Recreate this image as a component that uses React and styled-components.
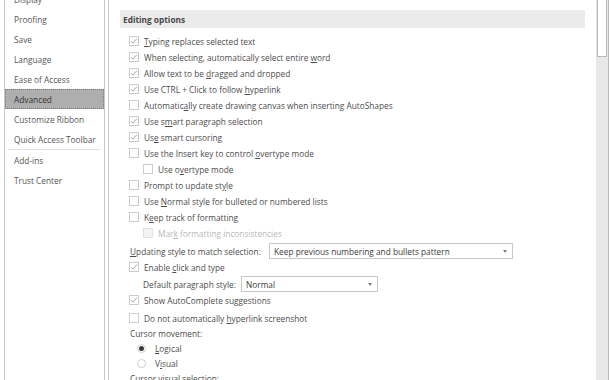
import React from 'react';
import styled, { createGlobalStyle } from 'styled-components';

const GlobalStyle = createGlobalStyle`
  html, body {
    margin: 0;
    padding: 0;
    background: #fff;
    overflow: hidden;
  }
  body {
    font-family: "Open Sans", "Noto Sans", sans-serif;
    font-size: 8.3px;
    color: #4c4c4c;
  }
`;

const Window = styled.div`
  display: flex;
  width: 610px;
  height: 380px;
  gap: 3px;
`;

const Nav = styled.nav`
  margin-left: 4px;
  width: 99px;
  border-left: 1px solid #c8c8c8;
  border-right: 1px solid #c8c8c8;
  display: flex;
  flex-direction: column;
`;

const NavList = styled.div`
  margin-top: -11px;
  display: flex;
  flex-direction: column;
`;

const NavItem = styled.div`
  height: 20px;
  display: flex;
  align-items: center;
  padding-left: 8px;
  box-sizing: border-box;
  color: ${(p) => (p.$active ? '#333' : '#555')};
  background: ${(p) => (p.$active ? '#aeaeae' : 'transparent')};
  border: 1px dotted ${(p) => (p.$active ? '#7a7a7a' : 'transparent')};
`;

const NavDivider = styled.div`
  height: 1px;
  background: #e2e2e2;
  margin: 0 4px 0 3px;
`;

const Content = styled.div`
  flex: 1;
  display: flex;
  border-left: 1px solid #c8c8c8;
`;

const Main = styled.main`
  flex: 1;
  padding: 10px 11px 0 11px;
`;

const SectionHeader = styled.div`
  height: 18px;
  background: #ebebeb;
  display: flex;
  align-items: center;
  padding-left: 3px;
  font-weight: 700;
  color: #474747;
`;

const Options = styled.div`
  margin-top: 5px;
  display: flex;
  flex-direction: column;
`;

const Row = styled.div`
  height: ${(p) => p.$h || 16}px;
  margin-top: ${(p) => p.$mt || 0}px;
  display: flex;
  align-items: center;
  padding-left: ${(p) => p.$indent || 9}px;
  white-space: nowrap;
  color: ${(p) => (p.$disabled ? '#b8b8b8' : '#4c4c4c')};
`;

const Box = styled.span`
  width: 10px;
  height: 10px;
  box-sizing: border-box;
  border: 1px solid ${(p) => (p.$disabled ? '#e0e0e0' : '#cdcdcd')};
  background: ${(p) => (p.$disabled ? '#f3f3f3' : '#fff')};
  margin-right: 5px;
  display: flex;
  align-items: center;
  justify-content: center;
  flex-shrink: 0;
`;

const Radio = styled.span`
  width: 9px;
  height: 9px;
  box-sizing: border-box;
  border-radius: 50%;
  border: 1px solid ${(p) => (p.$on ? '#d4d4d4' : '#cdcdcd')};
  background: #fff;
  margin-right: 9px;
  display: flex;
  align-items: center;
  justify-content: center;
  &::after {
    content: '';
    width: 5px;
    height: 5px;
    border-radius: 50%;
    background: ${(p) => (p.$on ? '#3a3a3a' : 'transparent')};
  }
`;

const Label = styled.span`
  width: ${(p) => (p.$w ? `${p.$w}px` : 'auto')};
  flex-shrink: 0;
`;

const Select = styled.div`
  width: ${(p) => p.$w}px;
  height: 16px;
  box-sizing: border-box;
  border: 1px solid #c8c8c8;
  background: #fff;
  display: flex;
  align-items: center;
  justify-content: space-between;
  padding: 0 5px 0 4px;
  color: #3a3a3a;
`;

const Arrow = styled.span`
  width: 0;
  height: 0;
  border-left: 2.5px solid transparent;
  border-right: 2.5px solid transparent;
  border-top: 3px solid #808080;
`;

const Scrollbar = styled.div`
  width: 12px;
  background: #e8e8e8;
  border-right: 1px solid #bcbcbc;
  margin-right: 1px;
`;

const Thumb = styled.div`
  height: 57px;
  box-sizing: border-box;
  margin: 0 1px;
  background: #fff;
  border: 1px solid #b8b8b8;
  border-top: none;
`;

const Check = () => (
  <svg width="8" height="8" viewBox="0 0 8 8">
    <path d="M1 4.2 L3 6.2 L7 1.5" fill="none" stroke="#9a9a9a" strokeWidth="0.9" />
  </svg>
);

const U = styled.span`
  text-decoration: underline;
  text-underline-offset: 1px;
`;

function CheckRow({ checked, disabled, indent, children, ...rest }) {
  return (
    <Row $indent={indent} $disabled={disabled} {...rest}>
      <Box $disabled={disabled}>{checked && <Check />}</Box>
      <span>{children}</span>
    </Row>
  );
}

const navItems = [
  'Display',
  'Proofing',
  'Save',
  'Language',
  'Ease of Access',
  'Advanced',
  'Customize Ribbon',
  'Quick Access Toolbar',
];

export default function App() {
  return (
    <>
      <GlobalStyle />
      <Window>
        <Nav>
          <NavList>
            {navItems.map((n) => (
              <NavItem key={n} $active={n === 'Advanced'}>
                {n}
              </NavItem>
            ))}
            <NavDivider />
            <NavItem>Add-ins</NavItem>
            <NavItem>Trust Center</NavItem>
          </NavList>
        </Nav>
        <Content>
          <Main>
            <SectionHeader>Editing options</SectionHeader>
            <Options>
              <CheckRow checked><U>T</U>yping replaces selected text</CheckRow>
              <CheckRow checked>When selecting, automatically select entire <U>w</U>ord</CheckRow>
              <CheckRow checked>Allow text to be <U>d</U>ragged and dropped</CheckRow>
              <CheckRow checked>Use CTRL + Click to follow <U>h</U>yperlink</CheckRow>
              <CheckRow>Automatic<U>a</U>lly create drawing canvas when inserting AutoShapes</CheckRow>
              <CheckRow checked>Use s<U>m</U>art paragraph selection</CheckRow>
              <CheckRow checked>Us<U>e</U> smart cursoring</CheckRow>
              <CheckRow>Use the Insert key to control <U>o</U>vertype mode</CheckRow>
              <CheckRow indent={23}>Use o<U>v</U>ertype mode</CheckRow>
              <CheckRow>Prompt to update st<U>y</U>le</CheckRow>
              <CheckRow>Use <U>N</U>ormal style for bulleted or numbered lists</CheckRow>
              <CheckRow>K<U>e</U>ep track of formatting</CheckRow>
              <CheckRow indent={23} disabled>Mar<U>k</U> formatting inconsistencies</CheckRow>
              <Row $mt={2} $indent={10}>
                <Label $w={139}><U>U</U>pdating style to match selection:</Label>
                <Select $w={244}>
                  <span>Keep previous numbering and bullets pattern</span>
                  <Arrow />
                </Select>
              </Row>
              <CheckRow checked>Enable <U>c</U>lick and type</CheckRow>
              <Row $mt={1} $indent={23}>
                <Label $w={98}>Default paragraph style:</Label>
                <Select $w={137}>
                  <span>Normal</span>
                  <Arrow />
                </Select>
              </Row>
              <CheckRow checked>Show AutoComplete suggestions</CheckRow>
              <CheckRow $mt={2}>Do not automatically <U>h</U>yperlink screenshot</CheckRow>
              <Row $h={15} $indent={10}>Cursor movement:</Row>
              <Row $h={15} $indent={17}>
                <Radio $on />
                <span><U>L</U>ogical</span>
              </Row>
              <Row $h={15} $indent={17}>
                <Radio />
                <span>V<U>i</U>sual</span>
              </Row>
              <Row $h={15} $indent={10}>Cursor visual selection:</Row>
            </Options>
          </Main>
          <Scrollbar>
            <Thumb />
          </Scrollbar>
        </Content>
      </Window>
    </>
  );
}
